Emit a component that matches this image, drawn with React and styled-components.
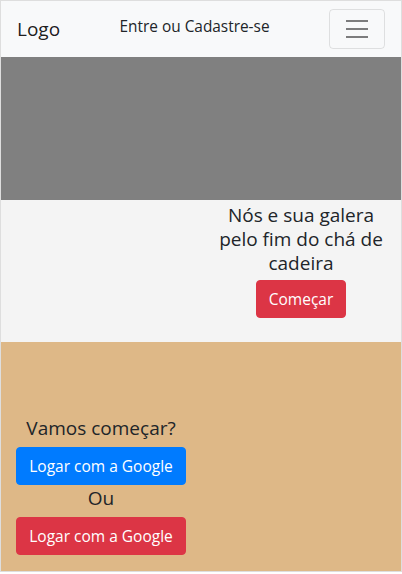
import React from 'react';
import styled, { createGlobalStyle } from 'styled-components';

const GlobalStyle = createGlobalStyle`
  html, body {
    margin: 0;
    padding: 0;
    background: #fff;
  }
  body {
    font-family: "Open Sans", "Noto Sans", sans-serif;
    color: #212529;
  }
  * { box-sizing: border-box; }
`

const Page = styled.div`
  width: 402px;
  border: 1px solid #dedede;
  background: #f4f4f4;
`

const Navbar = styled.nav`
  height: 56px;
  padding: 8px 16px;
  background: #f8f9fa;
  display: flex;
  align-items: center;
  justify-content: space-between;
`

const Brand = styled.a`
  font-size: 19px;
  color: rgba(0,0,0,.9);
  text-decoration: none;
`

const NavLink = styled.a`
  font-size: 15.4px;
  font-weight: 500;
  color: #212529;
  text-decoration: none;
  margin-top: -6px;
`

const Toggler = styled.button`
  width: 56px;
  height: 40px;
  padding: 4px 12px;
  background: transparent;
  border: 1px solid rgba(0,0,0,.1);
  border-radius: 4px;
  display: flex;
  align-items: center;
  justify-content: center;
`

const Hero = styled.div`
  height: 143px;
  background: #808080;
`

const Section = styled.section`
  height: ${props => props.$height}px;
  background: ${props => props.$bg};
  display: grid;
  grid-template-columns: 1fr 1fr;
`

const Column = styled.div`
  grid-column: ${props => props.$col};
  display: flex;
  flex-direction: column;
  align-items: center;
  padding: ${props => props.$top}px 15px 0;
  text-align: center;
`

const Heading = styled.h5`
  margin: 0 0 ${props => props.$mb || 8}px;
  font-size: 19px;
  font-weight: 500;
  line-height: 24px;
  color: #212529;
`

const Button = styled.button`
  height: 38px;
  padding: 0 12px;
  border: 1px solid ${props => props.$color};
  border-radius: 4px;
  background: ${props => props.$color};
  color: #fff;
  font-family: inherit;
  font-size: 15.5px;
  line-height: 24px;
  white-space: nowrap;
`

const Or = styled.div`
  font-size: 19px;
  font-weight: 500;
  line-height: 24px;
  margin: 1px 0 7px;
`

const App = () => {
  return (
    <>
      <GlobalStyle />
      <Page>
        <Navbar>
          <Brand href="#">Logo</Brand>
          <NavLink href="#">Entre ou Cadastre-se</NavLink>
          <Toggler aria-label="menu">
            <svg width="30" height="30" viewBox="0 0 30 30">
              <path d="M4 7h22M4 15h22M4 23h22" stroke="rgba(0,0,0,.5)" strokeWidth="2" strokeLinecap="butt" />
            </svg>
          </Toggler>
        </Navbar>

        <Hero />

        <Section $bg="#f4f4f4" $height={142}>
          <Column $col={2} $top={3}>
            <Heading $mb={5}>Nós e sua galera pelo fim do chá de cadeira</Heading>
            <Button $color="#dc3545">Começar</Button>
          </Column>
        </Section>

        <Section $bg="#deb887" $height={229}>
          <Column $col={1} $top={74}>
            <Heading $mb={7}>Vamos começar?</Heading>
            <Button $color="#007bff">Logar com a Google</Button>
            <Or>Ou</Or>
            <Button $color="#dc3545">Logar com a Google</Button>
          </Column>
        </Section>
      </Page>
    </>
  )
};

export default App;
